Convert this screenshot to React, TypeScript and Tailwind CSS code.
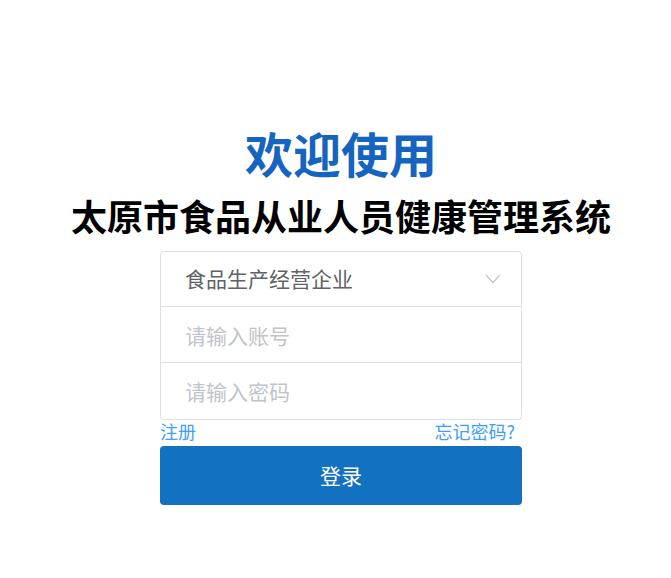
import { useState } from "react";

const font = { fontFamily: '"Noto Sans CJK SC", "Noto Sans", sans-serif' };

export default function App() {
  const [account, setAccount] = useState("");
  const [password, setPassword] = useState("");

  return (
    <div className="min-h-[578px] w-full bg-white pl-[11px]" style={font}>
      <div className="flex flex-col items-center pt-[123px]">
        <h1 className="text-[48px] leading-[58px] font-bold text-[#1565c0]">欢迎使用</h1>
        <h2 className="mt-[12px] text-[36px] leading-[44px] font-bold text-black">
          太原市食品从业人员健康管理系统
        </h2>

        <div className="mt-[14px] w-[362px]">
          {/* select */}
          <div className="flex h-[56px] items-center justify-between rounded-t border border-[#dcdfe6] pl-6 pr-[20px]">
            <span className="text-[21px] text-[#606266]">食品生产经营企业</span>
            <svg width="16" height="10" viewBox="0 0 16 10" fill="none">
              <path d="M1 1l7 7.5L15 1" stroke="#c0c4cc" strokeWidth="1.2" />
            </svg>
          </div>
          <input
            value={account}
            onChange={(e) => setAccount(e.target.value)}
            placeholder="请输入账号"
            className="block h-[56px] w-full border-x border-b border-[#dcdfe6] pl-6 text-[21px] text-[#606266] outline-none placeholder:text-[#c0c4cc]"
          />
          <input
            type="password"
            value={password}
            onChange={(e) => setPassword(e.target.value)}
            placeholder="请输入密码"
            className="block h-[57px] w-full rounded-b border-x border-b border-[#dcdfe6] pl-6 text-[21px] text-[#606266] outline-none placeholder:text-[#c0c4cc]"
          />

          <div className="flex items-center justify-between pr-[7px] text-[18px] leading-[22px] text-[#409eff]">
            <a href="#">注册</a>
            <a href="#">忘记密码?</a>
          </div>

          <button className="mt-[4px] h-[59px] w-full rounded bg-[#1271c0] text-[21px] text-white">
            登录
          </button>
        </div>
      </div>
    </div>
  );
}
